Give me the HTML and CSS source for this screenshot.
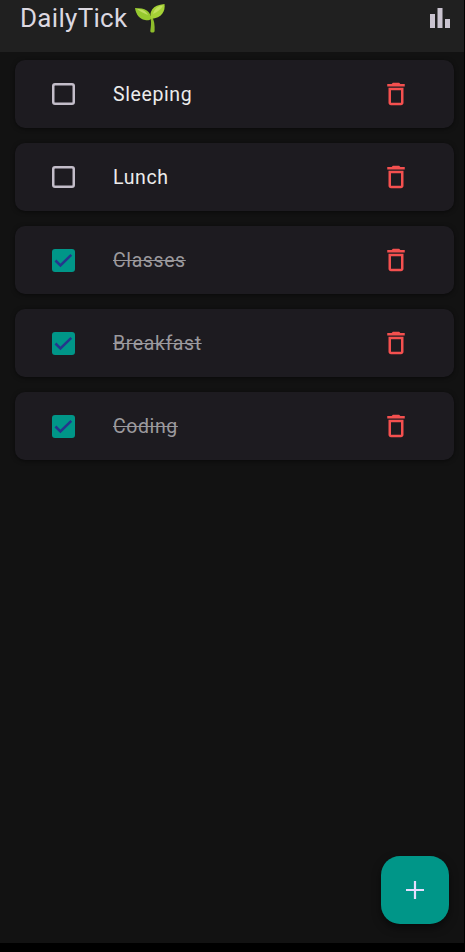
FILE: index.html
```html
<!DOCTYPE html>
<html lang="en">
<head>
<meta charset="utf-8">
<title>DailyTick</title>
<link rel="stylesheet" href="styles.css">
</head>
<body>
<svg class="defs" aria-hidden="true">
  <symbol id="trash" viewBox="0 0 24 24"><path d="M6 19c0 1.1.9 2 2 2h8c1.1 0 2-.9 2-2V7H6v12zM8 9h8v10H8V9zm7.5-5l-1-1h-5l-1 1H5v2h14V4h-3.5z"/></symbol>
  <symbol id="tick" viewBox="0 0 18 18"><path d="M2.7 9l3.9 3.9 8.5-8.3" fill="none" stroke="currentColor" stroke-width="2"/></symbol>
</svg>
<div class="screen">
  <header class="bar">
    <h1 class="title">DailyTick</h1>
    <svg class="sprout" viewBox="0 0 32 32">
      <path d="M15.5 14c2.3 4 1.6 9 .8 15 0 2 4.200 2 4.300 0 .3-6-.2-11-3.100-15z" fill="#8fbd2b"/>
      <path d="M17 17C17 9 11 6 1 6c1 6 4 11 10 12 2.500.4 4.500.3 6-1z" fill="#96c92f"/>
      <path d="M17 17c-2-7 1-14 13.500-15C31.500 9 28 16 17 17z" fill="#a5d236"/>
      <path d="M3 7c5 0 9 2 11 6-4-2-7-3-11-6z" fill="#c0de62"/>
      <path d="M19 12c1-5 5-8 10-8.500-2 4-5 6-10 8.500z" fill="#c2e05c"/>
    </svg>
    <svg class="chart" viewBox="0 0 20 20"><path d="M0 6h5v14H0zM7.500 0h5v20h-5zM15 11h5v9h-5z"/></svg>
  </header>
  <main class="list">
    <div class="card"><span class="box"></span><span class="name">Sleeping</span><svg class="trash"><use href="#trash"/></svg></div>
    <div class="card"><span class="box"></span><span class="name">Lunch</span><svg class="trash"><use href="#trash"/></svg></div>
    <div class="card done"><span class="box"><svg class="tick"><use href="#tick"/></svg></span><span class="name">Classes</span><svg class="trash"><use href="#trash"/></svg></div>
    <div class="card done"><span class="box"><svg class="tick"><use href="#tick"/></svg></span><span class="name">Breakfast</span><svg class="trash"><use href="#trash"/></svg></div>
    <div class="card done"><span class="box"><svg class="tick"><use href="#tick"/></svg></span><span class="name">Coding</span><svg class="trash"><use href="#trash"/></svg></div>
  </main>
  <button class="add" aria-label="Add"><svg viewBox="0 0 18 18"><path d="M9 0v18M0 9h18"/></svg></button>
</div>
</body>
</html>
```
FILE: styles.css
```css
* { box-sizing: border-box; }
body {
  margin: 0;
  height: 952px;
  background: #000;
  font-family: Roboto, sans-serif;
  overflow: hidden;
}
.defs { display: none; }
.screen {
  position: relative;
  width: 464px;
  height: 943px;
  background: #121212;
}
.bar {
  display: flex;
  align-items: flex-start;
  height: 52px;
  padding: 0 14px 0 20px;
  background: #202020;
}
.title {
  margin: 2px 0 0;
  font-size: 26px;
  line-height: 32px;
  font-weight: 400;
  color: #dcd8e0;
  letter-spacing: 0.3px;
}
.sprout { width: 32px; height: 32px; margin: 2px 0 0 7px; }
.chart { width: 20px; height: 20px; margin: 8px 0 0 auto; fill: #cac4d0; }
.list {
  display: flex;
  flex-direction: column;
  gap: 15px;
  padding: 8px 10px 0 15px;
}
.card {
  display: flex;
  align-items: center;
  height: 68px;
  padding: 0 43px 0 37px;
  border-radius: 10px;
  background: #1d1b20;
  box-shadow: 0 1px 4px rgba(0, 0, 0, 0.5);
}
.box {
  width: 23px;
  height: 22px;
  border-radius: 3px;
  box-shadow: inset 0 0 0 2.5px #c3bdc9;
}
.done .box { height: 23px; box-shadow: none; background: #009688; }
.tick { display: block; width: 23px; height: 23px; color: #25368c; }
.name {
  margin-left: 38px;
  padding-top: 1px;
  font-size: 19.5px;
  line-height: 28px;
  letter-spacing: 0.6px;
  color: #ececec;
}
.done .name { color: #9b999d; text-decoration: line-through; }
.trash { width: 30px; height: 30px; margin-left: auto; fill: #f4504f; }
.add {
  position: absolute;
  right: 15px;
  bottom: 19px;
  display: flex;
  align-items: center;
  justify-content: center;
  width: 68px;
  height: 68px;
  padding: 0;
  border: 0;
  border-radius: 19px;
  background: #009688;
  box-shadow: 0 4px 9px rgba(0, 0, 0, 0.5);
}
.add svg { width: 18px; height: 18px; fill: none; stroke: #e5ddff; stroke-width: 2.2; }
```
